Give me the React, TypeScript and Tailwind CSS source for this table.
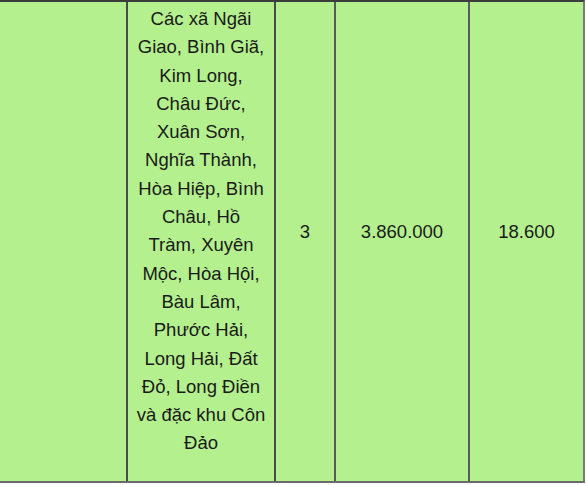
const lines = [
  'Các xã Ngãi',
  'Giao, Bình Giã,',
  'Kim Long,',
  'Châu Đức,',
  'Xuân Sơn,',
  'Nghĩa Thành,',
  'Hòa Hiệp, Bình',
  'Châu, Hồ',
  'Tràm, Xuyên',
  'Mộc, Hòa Hội,',
  'Bàu Lâm,',
  'Phước Hải,',
  'Long Hải, Đất',
  'Đỏ, Long Điền',
  'và đặc khu Côn',
  'Đảo',
];

export default function App() {
  return (
    <div
      className="w-[586px] h-[485px] bg-white text-[18.5px] text-[#1a1a1a]"
      style={{ fontFamily: '"Liberation Sans", Arial, sans-serif' }}
    >
      <div className="flex w-[585px] h-[483px] bg-[#b4f08e] border-t-2 border-t-[#3c3c3c] border-b-2 border-b-[#6a6a6a] border-r-2 border-r-[#7a7a7a]">
        <div className="w-[128px] border-r-2 border-r-[#4a4a4a]" />
        <div className="w-[148px] border-r-2 border-r-[#4a4a4a] pt-[3px] pb-[23px] text-center leading-[28.3px]">
          {lines.map((l) => (
            <div key={l} className="whitespace-nowrap">{l}</div>
          ))}
        </div>
        <div className="w-[60px] border-r-2 border-r-[#5a5a5a] pt-[3px] pb-[23px] flex items-center justify-center">
          3
        </div>
        <div className="w-[134px] border-r-2 border-r-[#5a5a5a] pt-[3px] pb-[23px] flex items-center justify-center">
          3.860.000
        </div>
        <div className="flex-1 pt-[3px] pb-[23px] flex items-center justify-center">
          18.600
        </div>
      </div>
    </div>
  );
}
